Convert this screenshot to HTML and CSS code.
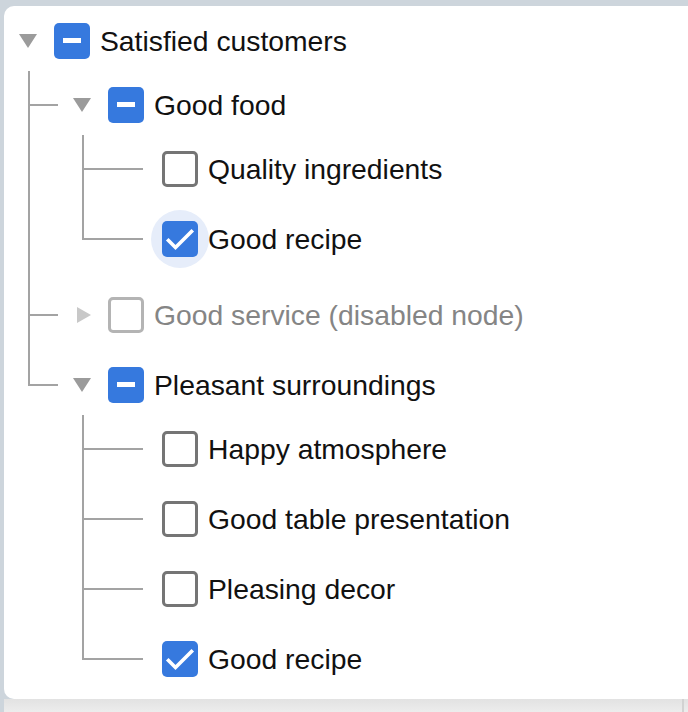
FILE: index.html
```html
<!DOCTYPE html>
<html lang="en">
<head>
<meta charset="utf-8">
<title>Tree</title>
<link rel="stylesheet" href="styles.css">
</head>
<body>
<div class="page">
  <div class="card">
    <ul class="tree">
      <li class="node">
        <div class="row"><span class="toggle down"></span><span class="cb ind"></span><span class="label">Satisfied customers</span></div>
        <ul class="group">
          <li class="node parent">
            <div class="row"><span class="toggle down"></span><span class="cb ind"></span><span class="label">Good food</span></div>
            <ul class="group">
              <li class="node leaf">
                <div class="row"><span class="toggle"></span><span class="cb"></span><span class="label">Quality ingredients</span></div>
              </li>
              <li class="node leaf">
                <div class="row"><span class="toggle"></span><span class="cb checked focus"><svg viewBox="0 0 36 36" width="36" height="36"><polyline points="6.5,19.5 13.5,26.5 29.5,10.5" fill="none" stroke="#fff" stroke-width="3.6" stroke-linecap="square"/></svg></span><span class="label">Good recipe</span></div>
              </li>
            </ul>
          </li>
          <li class="node after-group">
            <div class="row"><span class="toggle right"></span><span class="cb disabled"></span><span class="label muted">Good service (disabled node)</span></div>
          </li>
          <li class="node parent">
            <div class="row"><span class="toggle down"></span><span class="cb ind"></span><span class="label">Pleasant surroundings</span></div>
            <ul class="group">
              <li class="node leaf">
                <div class="row"><span class="toggle"></span><span class="cb"></span><span class="label">Happy atmosphere</span></div>
              </li>
              <li class="node leaf">
                <div class="row"><span class="toggle"></span><span class="cb"></span><span class="label">Good table presentation</span></div>
              </li>
              <li class="node leaf">
                <div class="row"><span class="toggle"></span><span class="cb"></span><span class="label">Pleasing decor</span></div>
              </li>
              <li class="node leaf">
                <div class="row"><span class="toggle"></span><span class="cb checked"><svg viewBox="0 0 36 36" width="36" height="36"><polyline points="6.5,19.5 13.5,26.5 29.5,10.5" fill="none" stroke="#fff" stroke-width="3.6" stroke-linecap="square"/></svg></span><span class="label">Good recipe</span></div>
              </li>
            </ul>
          </li>
        </ul>
      </li>
    </ul>
  </div>
  <div class="below"><span class="edge"></span></div>
</div>
</body>
</html>
```
FILE: styles.css
```css
html, body {
  margin: 0;
  padding: 0;
  background: #cdd5dc;
  overflow: hidden;
}
body {
  width: 688px;
  height: 712px;
  font-family: "Liberation Sans", Arial, Helvetica, sans-serif;
}
.page {
  padding: 6px 0 0 4px;
  display: flex;
  flex-direction: column;
}
.card {
  background: #fff;
  border-radius: 10px 0 0 10px;
  margin-right: -20px;
  padding: 5px 0 10px 6px;
}
.below {
  height: 20px;
  background: linear-gradient(#e2e2e2, #f2f2f2);
  display: flex;
  justify-content: flex-end;
}
.edge {
  width: 2px;
  height: 100%;
  background: #d2d2d2;
  margin-right: 4px;
}
ul {
  list-style: none;
  margin: 0;
  padding: 0;
}
.group > .node {
  position: relative;
  padding-left: 54px;
  padding-top: 10px;
}
.group > .node:first-child {
  padding-top: 4px;
}
.group > .node.after-group {
  padding-top: 16px;
}
.group > .node::before {
  content: "";
  position: absolute;
  left: 18px;
  top: 0;
  width: 2px;
  height: 100%;
  background: #a3a3a3;
}
.group > .node:last-child::before {
  height: 40px;
}
.group > .node:first-child:last-child::before {
  height: 34px;
}
.group > .node::after {
  content: "";
  position: absolute;
  left: 18px;
  width: 30px;
  height: 2px;
  background: #a3a3a3;
  top: 39px;
}
.group > .node:first-child::after {
  top: 33px;
}
.group > .node.after-group::after {
  top: 45px;
}
.group > .node.leaf::after {
  width: 61px;
}
.row {
  height: 60px;
  display: flex;
  align-items: center;
  position: relative;
  isolation: isolate;
}
.toggle {
  width: 36px;
  height: 36px;
  flex: none;
  margin-right: 8px;
  display: flex;
  align-items: center;
  justify-content: center;
}
.toggle.down::before {
  content: "";
  border-left: 9px solid transparent;
  border-right: 9px solid transparent;
  border-top: 14px solid #9b9b9b;
}
.toggle.right::before {
  content: "";
  border-top: 8px solid transparent;
  border-bottom: 8px solid transparent;
  border-left: 14px solid #c8c8c8;
  margin-left: 4px;
}
.cb {
  width: 36px;
  height: 36px;
  flex: none;
  box-sizing: border-box;
  border: 3px solid #757575;
  border-radius: 5px;
  margin-right: 10px;
  position: relative;
  display: flex;
  align-items: center;
  justify-content: center;
}
.cb.disabled {
  border-color: #b4b4b4;
}
.cb.ind, .cb.checked {
  border: none;
  background: #3679de;
}
.cb.ind::before {
  content: "";
  width: 18px;
  height: 5px;
  background: #fff;
  margin-top: -1px;
}
.cb svg {
  display: block;
}
.cb.focus::before {
  content: "";
  position: absolute;
  left: -11px;
  top: -11px;
  width: 58px;
  height: 58px;
  border-radius: 50%;
  background: #e6edfa;
  z-index: -1;
}
.label {
  font-size: 28.3px;
  color: #111;
  white-space: nowrap;
  padding-top: 1px;
}
.label.muted {
  color: #858585;
}
```
